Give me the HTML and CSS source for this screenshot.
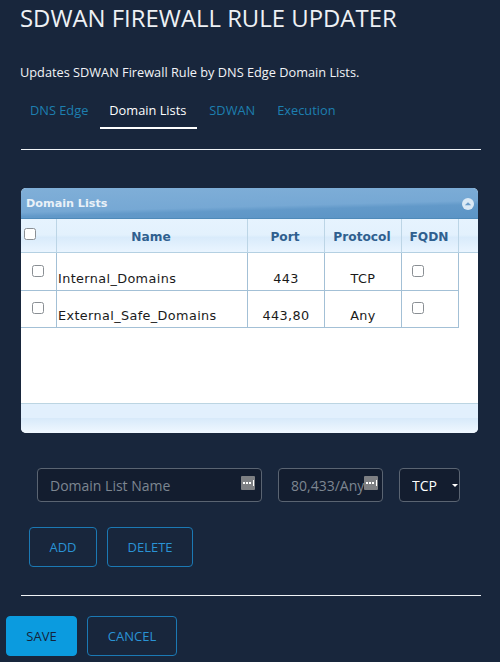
FILE: index.html
```html
<!DOCTYPE html>
<html lang="en">
<head>
<meta charset="utf-8">
<title>SDWAN Firewall Rule Updater</title>
<link rel="stylesheet" href="styles.css">
</head>
<body>
<main class="page">
  <h1 class="title">SDWAN FIREWALL RULE UPDATER</h1>
  <p class="desc">Updates SDWAN Firewall Rule by DNS Edge Domain Lists.</p>
  <nav class="tabs">
    <a class="tab">DNS Edge</a>
    <a class="tab active">Domain Lists</a>
    <a class="tab">SDWAN</a>
    <a class="tab">Execution</a>
  </nav>
  <hr class="rule rule-top">
  <section class="panel">
    <div class="panel-head">
      <span class="panel-title">Domain Lists</span>
      <span class="collapse"><svg width="12" height="12" viewBox="0 0 12 12"><circle cx="6" cy="6" r="6" fill="#dbe9f5"/><path d="M2.8 7.2 6 4.2l3.2 3z" fill="#6a9cc9"/></svg></span>
    </div>
    <table class="grid">
      <colgroup>
        <col class="c-check"><col class="c-name"><col class="c-port"><col class="c-proto"><col class="c-fqdn"><col class="c-rest">
      </colgroup>
      <thead>
        <tr>
          <th class="th-check"><input type="checkbox" class="box"></th>
          <th>Name</th><th>Port</th><th>Protocol</th><th>FQDN</th><th class="th-rest"></th>
        </tr>
      </thead>
      <tbody>
        <tr>
          <td class="td-check"><input type="checkbox" class="box"></td>
          <td class="td-name">Internal_Domains</td>
          <td class="td-center">443</td>
          <td class="td-center">TCP</td>
          <td class="td-check td-fqdn"><input type="checkbox" class="box"></td>
        </tr>
        <tr>
          <td class="td-check"><input type="checkbox" class="box"></td>
          <td class="td-name">External_Safe_Domains</td>
          <td class="td-center">443,80</td>
          <td class="td-center">Any</td>
          <td class="td-check td-fqdn"><input type="checkbox" class="box"></td>
        </tr>
      </tbody>
    </table>
    <div class="panel-body"></div>
    <div class="panel-foot"></div>
  </section>
  <div class="fields">
    <label class="field field-name">
      <input class="input" type="text" placeholder="Domain List Name">
      <svg class="key" width="14" height="14" viewBox="0 0 14 14"><rect width="14" height="14" rx="1" fill="#7d7f83"/><path d="M2 6h2v2H2zM5 6h2v2H5zM8 6h2v2H8z" fill="#fff"/><path d="M12 4h1v6h-1z" fill="#fff"/></svg>
    </label>
    <label class="field field-port">
      <input class="input" type="text" placeholder="80,433/Any">
      <svg class="key" width="14" height="14" viewBox="0 0 14 14"><rect width="14" height="14" rx="1" fill="#7d7f83"/><path d="M2 6h2v2H2zM5 6h2v2H5zM8 6h2v2H8z" fill="#fff"/><path d="M12 4h1v6h-1z" fill="#fff"/></svg>
    </label>
    <div class="field field-select">
      <select class="select"><option>TCP</option><option>UDP</option><option>Any</option></select>
    </div>
  </div>
  <div class="actions actions-list">
    <button class="btn btn-add">ADD</button>
    <button class="btn btn-delete">DELETE</button>
  </div>
  <hr class="rule rule-bottom">
  <div class="actions actions-main">
    <button class="btn btn-primary">SAVE</button>
    <button class="btn btn-cancel">CANCEL</button>
  </div>
</main>
</body>
</html>
```
FILE: styles.css
```css
* { box-sizing: border-box; }
html, body { margin: 0; padding: 0; }
body {
  background: #18263c;
  font-family: "Open Sans", "Liberation Sans", sans-serif;
  color: #fff;
}
.page { width: 500px; height: 662px; overflow: hidden; }
.title {
  margin: 0 0 0 20px;
  font-size: 23.9px;
  line-height: 36px;
  font-weight: 400;
  color: #eef1f5;
}
.desc {
  margin: 27px 0 0 20px;
  font-size: 12.75px;
  line-height: 18px;
  color: #f2f4f7;
}
.tabs { display: flex; margin: 11px 0 0 20px; height: 37px; }
.tab {
  display: block;
  padding-top: 9px;
  font-size: 12.8px;
  line-height: 18px;
  color: #1d7fb0;
}
.tab:nth-child(1) { margin-left: 10px; margin-right: 12px; }
.tab.active {
  color: #fff;
  border-bottom: 2px solid #fff;
  height: 37px;
  margin-right: 12px;
  width: 97px;
  padding-right: 2px;
  text-align: center;
}
.tab:nth-child(3) { margin-right: 22px; }
.rule { border: 0; height: 1px; background: #f0f3f6; margin: 0 0 0 21px; width: 460px; }
.rule-top { margin-top: 20px; }
.rule-bottom { margin-top: 28px; }
.panel {
  margin: 38px 0 0 21px;
  width: 457px;
  height: 245px;
  border-radius: 5px;
  overflow: hidden;
  background: #fff;
  display: flex;
  flex-direction: column;
}
.panel-head {
  height: 31px;
  flex: none;
  display: flex;
  align-items: center;
  justify-content: space-between;
  padding: 1px 4px 0 5px;
  background: linear-gradient(178.5deg, #80afd8 0%, #76a8d4 58%, #6299c9 68%, #5b94c5 100%);
  border-bottom: 1px solid #4f8ab9;
}
.panel-title {
  font-family: "DejaVu Sans", sans-serif;
  font-size: 11.2px;
  font-weight: 700;
  color: #e9f1f8;
}
.collapse { display: flex; margin-top: 1px; }
.grid {
  width: 457px;
  table-layout: fixed;
  border-collapse: separate;
  border-spacing: 0;
  flex: none;
  font-family: "DejaVu Sans", sans-serif;
}
.c-check { width: 36px; }
.c-name { width: 191px; }
.c-port { width: 77px; }
.c-proto { width: 77px; }
.c-fqdn { width: 57px; }
.c-rest { width: 19px; }
.grid th {
  height: 34px;
  padding: 3px 2px 0 0;
  font-size: 12.2px;
  font-weight: 700;
  color: #2f5f8f;
  background: linear-gradient(#e6f3fe 0%, #e3f1fd 48%, #d9ebfb 56%, #eaf5ff 100%);
  border-right: 1px solid #bcd5e6;
  border-bottom: 1px solid #b4d0e2;
}
.grid .th-rest { border-right: 0; }
.grid .th-check { text-align: left; vertical-align: top; padding: 9px 0 0 3px; }
.grid td {
  padding: 0 0 4px;
  font-size: 12.8px;
  color: #1a1a1a;
  border-right: 1px solid #a3c0d6;
  border-bottom: 1px solid #a3c0d6;
  height: 38px;
  vertical-align: bottom;
  line-height: 15px;
}
.grid tbody tr:last-child td { height: 37px; }
.grid .td-check { vertical-align: top; text-align: left; padding: 12px 0 0 11px; }
.grid tbody tr:last-child .td-check { padding-top: 11px; }
.grid .td-fqdn { padding-left: 10px; }
.grid .td-name { padding-left: 1px; letter-spacing: 0.03em; }
.grid .td-center { text-align: center; letter-spacing: 0.03em; }
.box {
  appearance: none;
  display: block;
  width: 12px;
  height: 12px;
  margin: 0;
  background: #fff;
  border: 1px solid #8a8f94;
  border-radius: 2.5px;
}
.panel-body { flex: 1; background: #fff; }
.panel-foot {
  height: 30px;
  flex: none;
  border-top: 1px solid #bcd5e2;
  background: linear-gradient(#e2f0fd 0%, #e2f0fd 48%, #d8eafa 50%, #f0f8ff 100%);
}
.fields { display: flex; gap: 16px; margin: 35px 0 0 37px; height: 34px; }
.field { display: block; position: relative; height: 34px; }
.field-name { width: 225px; }
.field-port { width: 105px; }
.field-select { width: 61px; }
.input {
  display: block;
  width: 100%;
  height: 34px;
  padding: 0 12px;
  background: #131d2f;
  border: 1px solid #5a6472;
  border-radius: 4px;
  font-family: "Open Sans", sans-serif;
  font-size: 14px;
  color: #fff;
  outline: none;
}
.input::placeholder { color: #7d8691; opacity: 1; }
.key { position: absolute; right: 7px; top: 8px; }
.field-port .key { right: 5px; }
.select {
  appearance: none;
  display: block;
  width: 100%;
  height: 34px;
  padding: 0 0 0 12px;
  background: #131d2f;
  border: 1px solid #5a6472;
  border-radius: 4px;
  font-family: "Open Sans", sans-serif;
  font-size: 14px;
  font-weight: 500;
  color: #fff;
  outline: none;
}
.field-select::after {
  content: "";
  position: absolute;
  right: 2px;
  top: 16px;
  border-left: 3px solid transparent;
  border-right: 3px solid transparent;
  border-top: 3px solid #fff;
}
.actions { display: flex; gap: 10px; }
.actions-list { margin: 25px 0 0 29px; }
.actions-main { margin: 20px 0 0 6px; }
.btn {
  height: 40px;
  padding: 0;
  border: 1px solid #1b79b4;
  border-radius: 4px;
  background: transparent;
  font-family: "Open Sans", sans-serif;
  font-size: 13px;
  color: #2a93d5;
}
.btn-add { width: 68px; }
.btn-delete { width: 86px; }
.btn-primary { width: 71px; background: #0b9bdf; border-color: #0b9bdf; color: #14233a; }
.btn-cancel { width: 90px; }
```
